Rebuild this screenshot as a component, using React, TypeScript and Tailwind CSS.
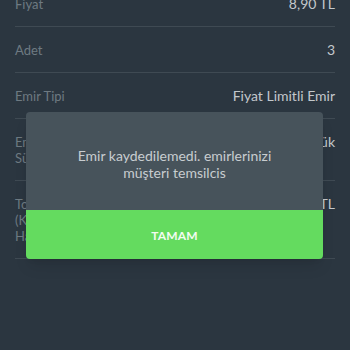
import React from "react";

const rows = [
  { label: "Fiyat", value: "8,90 TL" },
  { label: "Adet", value: "3" },
  { label: "Emir Tipi", value: "Fiyat Limitli Emir" },
  { label: "Emir\nSüresi", value: "Günlük" },
  { label: "Toplam\n(Komisyon\nHariç)", value: "26,70 TL" },
];

export default function App() {
  return (
    <div
      className="relative w-[350px] h-[350px] overflow-hidden bg-[#2b3640]"
      style={{ fontFamily: "Lato, 'Open Sans', sans-serif" }}
    >
      <div className="px-[15px] -mt-[19px]">
        {rows.map((r) => (
          <div
            key={r.label}
            className="flex justify-between items-start pt-[15px] pb-[14px] border-b border-[#3f4a53]"
          >
            <div className="whitespace-pre-line text-[13px] leading-[16px] text-[#6e7a82]">
              {r.label}
            </div>
            <div className="text-[14px] leading-[16px] text-[#c3c8cc]">{r.value}</div>
          </div>
        ))}
      </div>

      <div className="absolute left-[26px] top-[112px] w-[297px] rounded-[4px] overflow-hidden shadow-lg">
        <div className="bg-[#47535b] h-[98px] flex items-center justify-center pt-[5px] px-4">
          <p className="text-center text-[14px] leading-[17px] text-[#c8cdd0]">
            Emir kaydedilemedi. emirlerinizi
            <br />
            müşteri temsilcis
          </p>
        </div>
        <div className="bg-[#64db5f] h-[49px] flex items-center justify-center pt-[3px]">
          <span className="text-[12px] font-bold text-[#f2fbf1] tracking-[0.2px]">TAMAM</span>
        </div>
      </div>
    </div>
  );
}
